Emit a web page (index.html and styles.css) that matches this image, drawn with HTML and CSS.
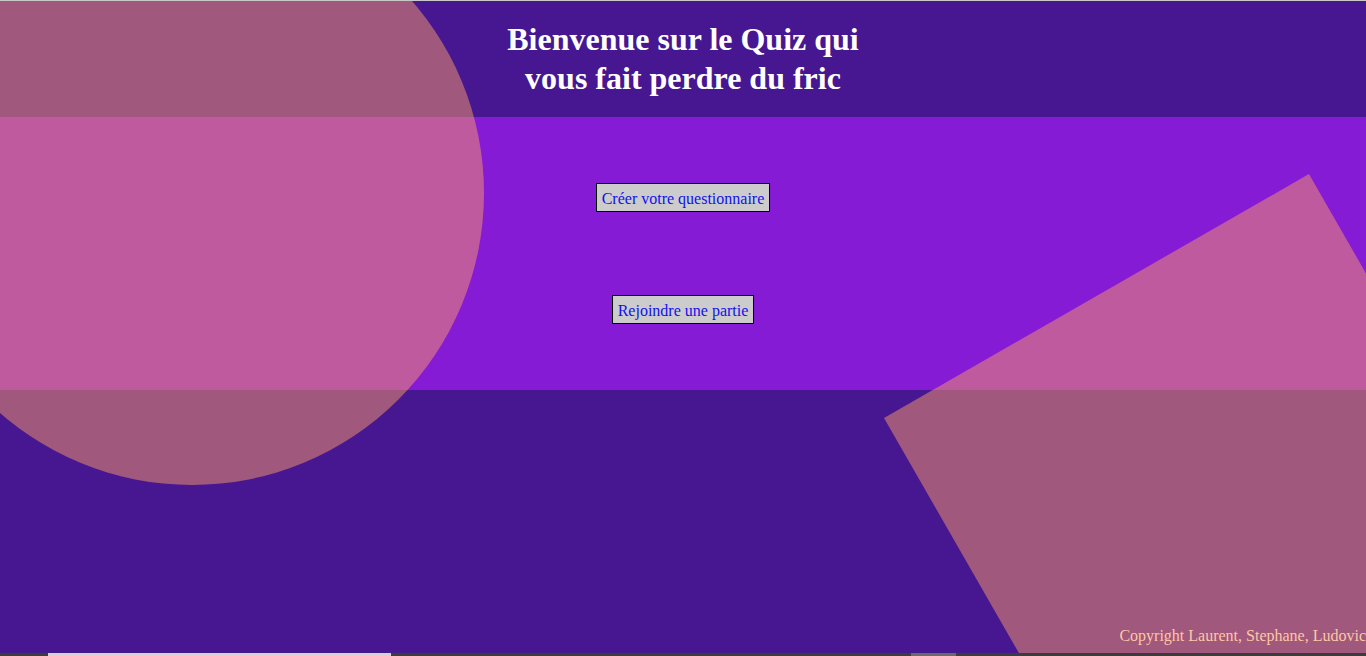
FILE: index.html
```html
<!DOCTYPE html>
<html lang="fr">
<head>
<meta charset="utf-8">
<title>Quiz</title>
<link rel="stylesheet" href="styles.css">
</head>
<body>
<div class="page">
  <div class="topline"></div>
  <header class="header">
    <h1 class="title">Bienvenue sur le Quiz qui vous fait perdre du fric</h1>
  </header>
  <main class="band">
    <button class="btn">Créer votre questionnaire</button>
    <button class="btn">Rejoindre une partie</button>
  </main>
  <section class="bottom">
    <footer class="copyright">Copyright Laurent, Stephane, Ludovic</footer>
  </section>
  <div class="strip"><span class="thumb"></span><span class="mark"></span></div>
  <div class="circle"></div>
  <div class="rect"></div>
</div>
</body>
</html>
```
FILE: styles.css
```css
html, body {
  margin: 0;
  padding: 0;
  width: 1366px;
  height: 656px;
  overflow: hidden;
  background: #461790;
  font-family: "Liberation Serif", "Times New Roman", serif;
}
.page {
  position: relative;
  width: 1366px;
  height: 656px;
  overflow: hidden;
  display: flex;
  flex-direction: column;
}
.topline {
  height: 1px;
  background: #c8c8c8;
  position: relative;
  z-index: 4;
}
.header {
  height: 116px;
  background: #461790;
  display: flex;
  justify-content: center;
  align-items: center;
}
.title {
  margin: 0;
  width: 380px;
  text-align: center;
  color: #fff;
  font-size: 32px;
  font-weight: bold;
  line-height: 39px;
  position: relative;
  z-index: 3;
}
.band {
  height: 273px;
  background: #861bd5;
  display: flex;
  flex-direction: column;
  align-items: center;
  padding-top: 66px;
  box-sizing: border-box;
  gap: 83px;
}
.btn {
  position: relative;
  z-index: 3;
  font-family: "Liberation Serif", "Times New Roman", serif;
  font-size: 16px;
  color: #1010f0;
  background: #cccccc;
  border: 1px solid #000;
  padding: 5px 5px 3px;
  height: 29px;
  line-height: 19px;
  margin: 0;
}
.bottom {
  flex: 1;
  background: #461790;
  display: flex;
  justify-content: flex-end;
  align-items: flex-end;
}
.copyright {
  position: relative;
  z-index: 3;
  color: #fdc7a5;
  font-size: 16px;
  margin-right: 0;
  margin-bottom: 8px;
  white-space: nowrap;
}
.strip {
  height: 3px;
  background: #3c3c3c;
  position: relative;
  z-index: 4;
  display: flex;
}
.thumb {
  margin-left: 48px;
  width: 343px;
  background: #d4d4d4;
}
.mark {
  margin-left: 520px;
  width: 45px;
  background: #6a6a6a;
}
.circle {
  position: absolute;
  left: -100px;
  top: -99px;
  width: 584px;
  height: 584px;
  border-radius: 50%;
  background: rgba(250, 153, 104, 0.5);
  z-index: 1;
}
.rect {
  position: absolute;
  left: 884px;
  top: 418px;
  width: 490px;
  height: 500px;
  background: rgba(250, 153, 104, 0.5);
  transform-origin: 0 0;
  transform: rotate(-29.86deg);
  z-index: 1;
}
```
